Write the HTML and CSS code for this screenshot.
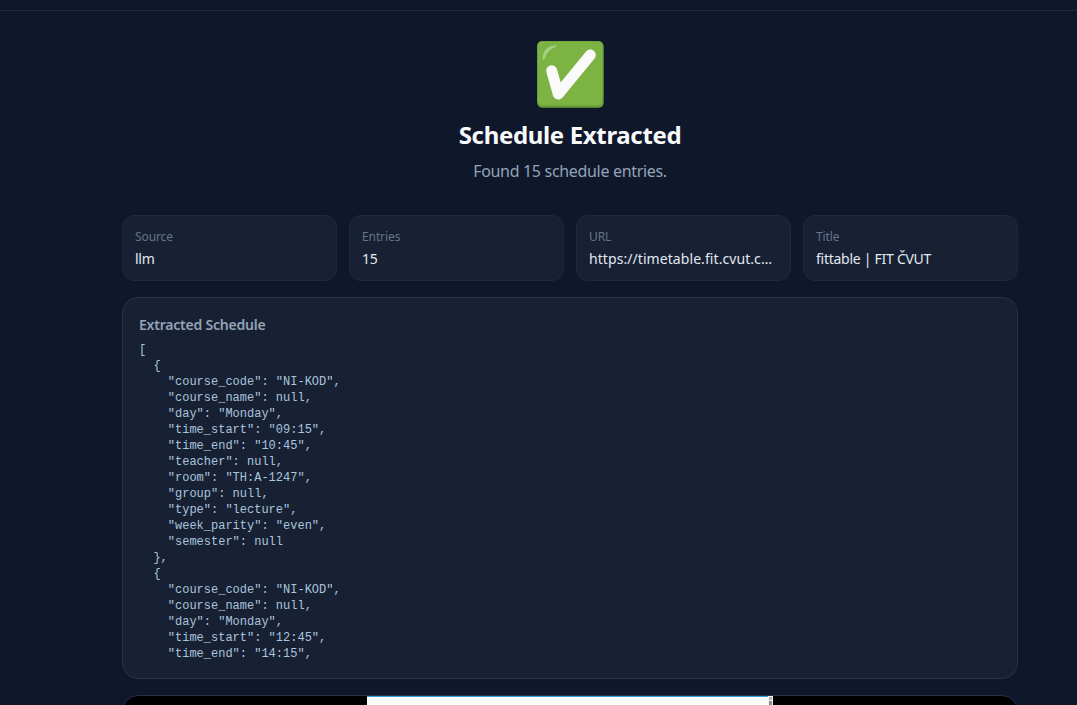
FILE: index.html
```
<!DOCTYPE html>
<html lang="en">
<head>
<meta charset="utf-8">
<title>Schedule Extracted</title>
<link rel="stylesheet" href="styles.css">
</head>
<body>
<div class="topline"></div>
<main class="page">
  <header class="hero">
    <svg class="check" viewBox="0 0 68 68" aria-hidden="true">
      <rect x="1.300" y="0.300" width="66.400" height="66.400" rx="5" fill="#689f38"/>
      <rect x="1.300" y="0.300" width="65.200" height="64" rx="4.500" fill="#7cb342"/>
      <path d="M6.700 18c-.5-7 4-13 12-13.500 2.500-.2 2.500 1 .5 1.700-5 1.700-8.500 5.500-10 10.500-.8 2.700-2.300 3-2.500 1.300z" fill="#a5cf85"/>
      <path d="M15.700 29.700L22.300 53L54.300 14" fill="none" stroke="#fafafa" stroke-width="11" stroke-linecap="round" stroke-linejoin="round"/>
    </svg>
    <h1 class="title">Schedule Extracted</h1>
    <p class="subtitle">Found 15 schedule entries.</p>
  </header>
  <section class="stats">
    <div class="stat"><div class="stat-label">Source</div><div class="stat-value">llm</div></div>
    <div class="stat"><div class="stat-label">Entries</div><div class="stat-value">15</div></div>
    <div class="stat"><div class="stat-label">URL</div><div class="stat-value stat-value-url">https://timetable.fit.cvut.c…</div></div>
    <div class="stat"><div class="stat-label">Title</div><div class="stat-value">fittable | FIT ČVUT</div></div>
  </section>
  <section class="panel">
    <h2 class="panel-title">Extracted Schedule</h2>
<pre class="code">[
  {
    "course_code": "NI-KOD",
    "course_name": null,
    "day": "Monday",
    "time_start": "09:15",
    "time_end": "10:45",
    "teacher": null,
    "room": "TH:A-1247",
    "group": null,
    "type": "lecture",
    "week_parity": "even",
    "semester": null
  },
  {
    "course_code": "NI-KOD",
    "course_name": null,
    "day": "Monday",
    "time_start": "12:45",
    "time_end": "14:15",</pre>
  </section>
  <section class="shot">
    <div class="shot-page"></div>
    <div class="shot-scrollbar"><span class="shot-arrow"></span><span class="shot-thumb"></span></div>
  </section>
</main>
</body>
</html>
```
FILE: styles.css
```
* { box-sizing: border-box; }
html, body { height: 100%; }
body {
  margin: 0;
  overflow: hidden;
  background: #0f172a;
  color: #f1f5f9;
  font-family: "Noto Sans", "Open Sans", sans-serif;
}
.topline { height: 11px; border-bottom: 1px solid #1e293b; }
.page { width: 896px; margin-left: 122px; padding-top: 30px; }
.hero { display: flex; flex-direction: column; align-items: center; }
.check { display: block; width: 68px; height: 68px; }
.title { margin: 10px 0 0; font-size: 24px; line-height: 32px; font-weight: 700; letter-spacing: -0.34px; color: #f8fafc; }
.subtitle { margin: 8px 0 0; font-size: 16px; line-height: 24px; letter-spacing: -0.32px; color: #94a3b8; }
.stats { display: grid; grid-template-columns: repeat(4, 1fr); gap: 12px; margin-top: 32px; }
.stat { height: 66px; padding: 12px; background: #172133; border: 1px solid #1e293b; border-radius: 12px; min-width: 0; }
.stat-label { font-size: 12px; line-height: 16px; margin-top: 1px; letter-spacing: -0.1px; color: #64748b; }
.stat-value { margin-top: 4px; font-size: 14px; line-height: 20px; letter-spacing: -0.27px; color: #e2e8f0; white-space: nowrap; }
.stat-value-url { letter-spacing: 0.07px; }
.panel { height: 382px; margin-top: 16px; padding: 17px 16px 16px; background: #172133; border: 1px solid #263347; border-radius: 16px; }
.panel-title { margin: 0; font-size: 14px; line-height: 20px; font-weight: 600; letter-spacing: -0.22px; color: #94a3b8; }
.code { margin: 7px 0 0; font-family: "Liberation Mono", monospace; font-size: 12px; line-height: 16px; color: #aac4de; }
.shot { display: flex; justify-content: center; height: 60px; margin-top: 16px; background: #000; border: 1px solid #263347; border-radius: 16px; overflow: hidden; }
.shot-page { width: 401px; margin-left: -1px; background: #fff; border-top: 1px solid #38a0d8; }
.shot-scrollbar { display: flex; flex-direction: column; align-items: center; gap: 1px; width: 5px; padding-top: 1px; background: #f1f1f1; }
.shot-arrow { width: 3px; height: 3px; background: #b5b5b5; }
.shot-thumb { width: 3px; height: 20px; background: #8f8f8f; }
```
